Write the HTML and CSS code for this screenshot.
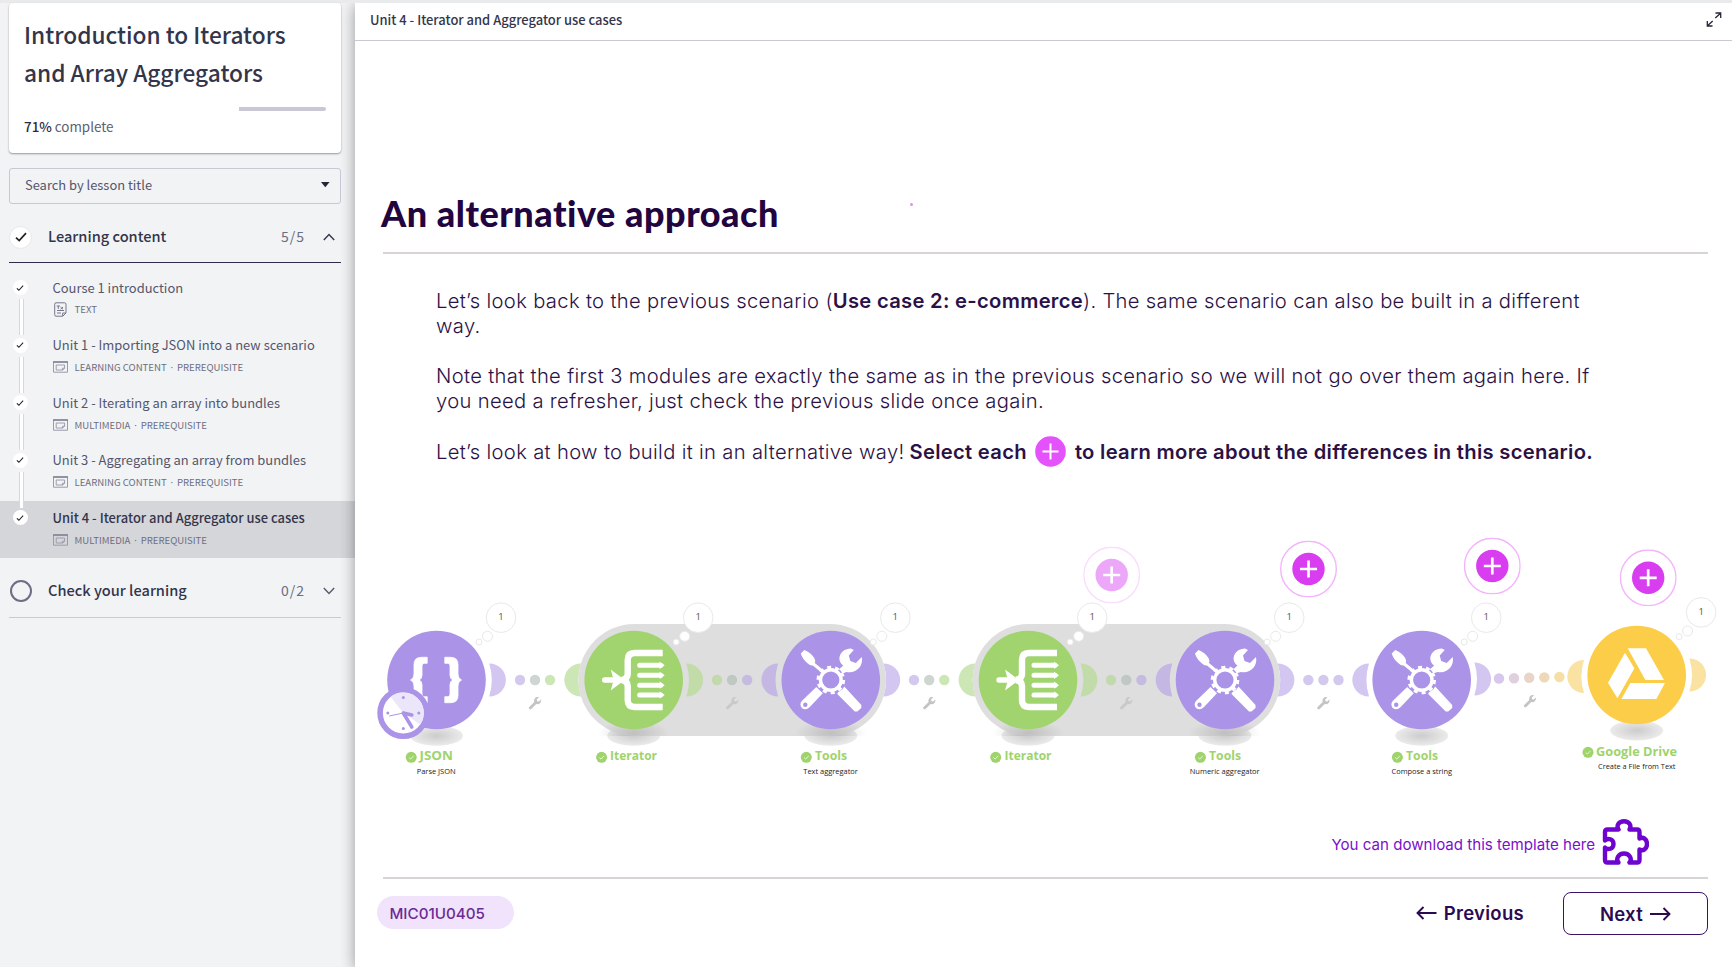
FILE: index.html
```html
<!DOCTYPE html>
<html lang="en">
<head>
<meta charset="utf-8">
<title>Introduction to Iterators and Array Aggregators</title>
<link rel="stylesheet" href="styles.css">
</head>
<body>
<svg class="defs" width="0" height="0">
  <defs>
    <radialGradient id="shade"><stop offset="0" stop-color="#000" stop-opacity=".2"/><stop offset="1" stop-color="#000" stop-opacity=".08"/></radialGradient>
    <radialGradient id="soft"><stop offset="0" stop-color="#000" stop-opacity=".14"/><stop offset="1" stop-color="#000" stop-opacity="0"/></radialGradient>
    <symbol id="tick" viewBox="0 0 16 16"><path d="M3 8.6 6.2 11.6 13 4.2" fill="none" stroke="#222" stroke-width="1.7"/></symbol>
    <symbol id="media" viewBox="0 0 15 12"><path d="M.5 1h14v10.2H.5z" fill="none" stroke="#9a9aac"/><path d="M0 1h15" stroke="#85859a" stroke-width="1.6"/><path d="M3.2 4h8.400v3.400L9.600 9H3.200zM9.400 9V7.200h2.200" fill="none" stroke="#9c9cae"/></symbol>
    <symbol id="plus" viewBox="-28.5 -28.5 57 57"><circle r="27.8" fill="#fff" stroke="#f3b4fb" stroke-width="1.4"/><circle r="16.2" fill="#d83df0"/><path d="M-8.5 0H8.5M0-8.5V8.5" stroke="#fff" stroke-width="2.7"/></symbol>
    <g id="wrench"><path d="M-6 4.2-.7-1C-1.6-4.2 1-6.500 4-5.800L1.700-3.400 2.200-1.800 3.900-1.400 6-3.600C6.600-.5 4 1.800 1.300 1.100L-4 6.200C-5.200 6.800-6.700 5.400-6 4.200Z"/></g>
    <g id="earR"><path d="M52.700-16.500A16.700 16.500 0 0 1 52.700 16.500A55 55 0 0 0 52.700-16.500Z"/></g>
    <g id="earL"><path d="M-52.700-16.500A16.700 16.500 0 0 0-52.700 16.500A55 55 0 0 1-52.700-16.500Z"/></g>
    <g id="bubble"><g fill="#fff" stroke="#e9e9e9" stroke-width="1"><circle cx="42.500" cy="-38" r="3"/><circle cx="51" cy="-43.700" r="5"/><circle cx="64.500" cy="-62.300" r="14.800"/></g><text x="64.500" y="-59.600" class="count">1</text></g>
    <g id="ok"><circle r="5.500" fill="#9fd36c"/><path d="M-2.300.2-.6 1.800 2.500-1.500" fill="none" stroke="#e6f5d8" stroke-width="1"/></g>
    <g id="json"><circle r="49.300" fill="#ab94e8"/><g fill="#fff" stroke="#fff" stroke-width=".8"><path d="M-9.300-22.700H-15Q-22.500-22.700-22.500-15.500V-6Q-22.500-1.500-26 0Q-22.500 1.500-22.500 6V15.500Q-22.500 22.700-15 22.700H-9.300V16.700H-12.500Q-14.500 16.700-14.500 14V5Q-14.500 1.500-17 0Q-14.500-1.500-14.500-5V-14Q-14.500-16.700-12.500-16.700H-9.300Z"/><path transform="scale(-1 1)" d="M-8.300-22.700H-14Q-21.500-22.700-21.500-15.500V-6Q-21.500-1.500-25 0Q-21.500 1.500-21.500 6V15.500Q-21.500 22.700-14 22.700H-8.300V16.700H-11.500Q-13.500 16.700-13.500 14V5Q-13.500 1.500-16 0Q-13.500-1.500-13.500-5V-14Q-13.500-16.700-11.500-16.700H-8.300Z"/></g></g>
    <g id="iter"><circle r="49.300" fill="#a1d46f"/><path d="M29-27H1Q-6-27-6-20V-6Q-6-1-12 0Q-6 1-6 6V20Q-6 27 1 27H29" fill="none" stroke="#fff" stroke-width="6.400"/><path d="M-29 0H-16" stroke="#fff" stroke-width="5.400" stroke-linecap="round"/><path d="M-23-10.500-9 0-23 10.500-20 0Z" fill="#fff"/><g fill="none" stroke="#fff" stroke-width="5" stroke-linecap="round"><path d="M6-14.700H27M6-4.700H27M6 5.200H27M6 15H27"/></g><g fill="#fff"><path d="M26-18.300 31-14.700 26-11.100zM26-8.300 31-4.700 26-1.100zM26 1.600 31 5.200 26 8.800zM26 11.400 31 15 26 18.600z"/></g></g>
    <g id="tools"><circle r="49.300" fill="#ab94e8"/><path d="M-30-26.500-26.500-30Q-20-27.500-16.500-22Q-15-19-16-17L-7-9.500-9.500-7.500-18-14.500Q-20.500-14-23-16.500Q-28.500-21-30-26.500Z" fill="#fff"/><path d="M7.500-10 12.500-14.500C5-20 9-31 20-31.500L23-30 18-24.500 19.500-19 25-17 31-23C33-14 25-6 16-8L11-6.500Z" fill="#fff"/><path d="M-14.500 7-8 13.200-21 27Q-25 31-29 28Q-32 24-28.500 20.500Z" fill="#fff"/><circle cx="-25.500" cy="24.800" r="2.200" fill="#ab94e8"/><path d="M13.500 6.500 30.500 25V28L26.500 31.500H24L6.500 14 7 12.500 11.500 9.500Z" fill="#fff"/><circle r="13.600" fill="#ab94e8"/><circle r="12.500" fill="none" stroke="#fff" stroke-width="3.600" stroke-dasharray="3.900 3.950"/><circle r="10.300" fill="#ab94e8" stroke="#fff" stroke-width="3.400"/></g>
    <g id="drive"><circle r="49.300" fill="#fccd48"/><path fill="#fff" d="M-11.700-22.300-2.300-6.700-19.300 23.300-28.700 7.700ZM-9-26.700H9.300L27.300 5H8.700ZM-6.300 8H28.300L19.700 24H-15.300Z"/></g>
  </defs>
</svg>
<div class="app">
  <aside class="sidebar">
    <section class="card">
      <h2 class="course">Introduction to Iterators<br>and Array Aggregators</h2>
      <div class="bar"><span class="bar-rest"></span></div>
      <p class="done"><b>71%</b> complete</p>
    </section>
    <div class="search"><span>Search by lesson title</span><svg width="9" height="6"><path d="M0 0H8.600L4.300 5.200z" fill="#26263a"/></svg></div>
    <div class="section open">
      <span class="badge"><svg width="16" height="16"><use href="#tick"/></svg></span>
      <h3>Learning content</h3><span class="num">5/5</span>
      <svg width="12" height="8"><path d="M.8 7 6 1.600 11.200 7" fill="none" stroke="#3a3a50" stroke-width="1.500"/></svg>
    </div>
    <ul class="lessons">
      <li><span class="dot"><svg width="10" height="10"><use href="#tick"/></svg></span><div><h4>Course 1 introduction</h4><p><svg class="doc" width="13" height="15" viewBox="0 0 13 15" fill="none" stroke="#77778b"><path d="M2 .8h8.500q1.500 0 1.500 1.500V11L8.800 14.200H2Q.7 14.200.7 12.700V2.300Q.7.8 2 .8zM8.700 14V11h3M3 8.500h7M3 11h4M2.700 4h3.200M4.300 4v3M6.500 5l2.500 2.300M9 5 6.500 7.300"/></svg><span>TEXT</span></p></div></li>
      <li><span class="dot"><svg width="10" height="10"><use href="#tick"/></svg></span><div><h4>Unit 1 - Importing JSON into a new scenario</h4><p><svg width="15" height="12"><use href="#media"/></svg><span>LEARNING CONTENT <i>·</i> PREREQUISITE</span></p></div></li>
      <li><span class="dot"><svg width="10" height="10"><use href="#tick"/></svg></span><div><h4>Unit 2 - Iterating an array into bundles</h4><p><svg width="15" height="12"><use href="#media"/></svg><span>MULTIMEDIA <i>·</i> PREREQUISITE</span></p></div></li>
      <li><span class="dot"><svg width="10" height="10"><use href="#tick"/></svg></span><div><h4>Unit 3 - Aggregating an array from bundles</h4><p><svg width="15" height="12"><use href="#media"/></svg><span>LEARNING CONTENT <i>·</i> PREREQUISITE</span></p></div></li>
      <li class="current"><span class="dot"><svg width="10" height="10"><use href="#tick"/></svg></span><div><h4>Unit 4 - Iterator and Aggregator use cases</h4><p><svg width="15" height="12"><use href="#media"/></svg><span>MULTIMEDIA <i>·</i> PREREQUISITE</span></p></div></li>
    </ul>
    <div class="section">
      <span class="badge ring"></span>
      <h3>Check your learning</h3><span class="num">0/2</span>
      <svg width="12" height="8"><path d="M.8 1 6 6.400 11.200 1" fill="none" stroke="#5b5b70" stroke-width="1.500"/></svg>
    </div>
  </aside>
  <main class="main">
    <header class="top"><span>Unit 4 - Iterator and Aggregator use cases</span>
      <svg width="16" height="15" viewBox="0 0 16 15" fill="none" stroke="#26263a" stroke-width="1.300"><path d="M9.500 1H14.700V6M14.500 1.200 9.300 6M6.500 14H1.300V9M1.500 13.800 6.700 9"/></svg>
    </header>
    <div class="slide">
      <h1>An alternative approach</h1>
      <i class="speck"></i>
      <hr>
      <div class="copy">
        <p>Let’s look back to the previous scenario (<b>Use case 2: e-commerce</b>). The same scenario can also be built in a different<br>way.</p>
        <p>Note that the first 3 modules are exactly the same as in the previous scenario so we will not go over them again here. If<br>you need a refresher, just check the previous slide once again.</p>
        <p class="pick"><span>Let’s look at how to build it in an alternative way!</span><b class="call">Select each</b><svg width="31" height="31" viewBox="-15.500 -15.500 31 31"><circle r="15.300" fill="#e352fb"/><path d="M-8 0H8M0-8V8" stroke="#fff" stroke-width="2"/></svg><b>to learn more about the differences in this scenario.</b></p>
      </div>
      <svg class="flow" width="1377" height="260" viewBox="355 530 1377 260">
        <g fill="#d3c6f0"><use href="#earR" x="436.500" y="680"/><use href="#earR" x="830.800" y="680"/><use href="#earR" x="1225" y="680"/><use href="#earR" x="1421.700" y="679"/><use href="#earL" x="1421.700" y="680"/></g>
        <g fill="#cde6b6"><use href="#earL" x="633.700" y="680"/><use href="#earL" x="1028" y="680"/></g>
        <g fill="#fae2a2"><use href="#earL" x="1636.700" y="676.500"/><use href="#earR" x="1636.700" y="675"/></g>
        <g fill="url(#shade)"><ellipse cx="436.500" cy="735.700" rx="26.500" ry="10"/><ellipse cx="633.700" cy="735.700" rx="26.500" ry="10"/><ellipse cx="830.800" cy="735.700" rx="26.500" ry="10"/><ellipse cx="1028" cy="735.700" rx="26.500" ry="10"/><ellipse cx="1225" cy="735.700" rx="26.500" ry="10"/><ellipse cx="1421.700" cy="735.700" rx="26.500" ry="10"/><ellipse cx="1636.700" cy="730.500" rx="26.500" ry="10"/></g>
        <g fill="#dedede"><rect x="578.500" y="624" width="307.500" height="112" rx="56"/><rect x="972.700" y="624" width="307.500" height="112" rx="56"/></g>
        <svg x="355" y="624" width="1377" height="112" viewBox="355 624 1377 112"><g fill="url(#soft)"><ellipse cx="633.700" cy="733" rx="36" ry="13"/><ellipse cx="830.800" cy="733" rx="36" ry="13"/><ellipse cx="1028" cy="733" rx="36" ry="13"/><ellipse cx="1225" cy="733" rx="36" ry="13"/></g></svg>
        <g fill="#c1dba9"><use href="#earR" x="633.700" y="680"/><use href="#earR" x="1028" y="680"/></g>
        <g fill="#c5b7e3"><use href="#earL" x="830.800" y="680"/><use href="#earL" x="1225" y="680"/></g>
        <g fill="#d3c8ee"><circle cx="520" cy="680" r="5.200"/><circle cx="914" cy="680" r="5.200"/><circle cx="1308.300" cy="680" r="5.200"/><circle cx="1323.400" cy="680" r="5.200"/><circle cx="1338.500" cy="680" r="5.200"/></g>
        <g fill="#cdd6d0"><circle cx="535" cy="680" r="5.200"/><circle cx="929.200" cy="680" r="5.200"/></g>
        <g fill="#cde6b6"><circle cx="550" cy="680" r="5.200"/><circle cx="944.300" cy="680" r="5.200"/></g>
        <g fill="#c1d9ac"><circle cx="717" cy="680" r="5.200"/><circle cx="1111" cy="680" r="5.200"/></g>
        <g fill="#bfc8c3"><circle cx="732" cy="680" r="5.200"/><circle cx="1126.300" cy="680" r="5.200"/></g>
        <g fill="#c5bbe1"><circle cx="747.200" cy="680" r="5.200"/><circle cx="1141.400" cy="680" r="5.200"/></g>
        <circle cx="1499" cy="678.500" r="5.200" fill="#d5c8ec"/><circle cx="1514" cy="678.200" r="5.200" fill="#e0cfdc"/><circle cx="1529.200" cy="677.800" r="5.200" fill="#e8d5ca"/><circle cx="1544.300" cy="677.400" r="5.200" fill="#eed8b8"/><circle cx="1559.400" cy="677" r="5.200" fill="#f6dfa6"/>
        <g fill="#c4c4c4"><use href="#wrench" x="535" y="703"/><use href="#wrench" x="929.300" y="703"/><use href="#wrench" x="1323.400" y="703"/><use href="#wrench" x="1530" y="701"/></g>
        <g fill="#c9c9c9"><use href="#wrench" x="732.200" y="703"/><use href="#wrench" x="1126.300" y="703"/></g>
        <use href="#json" x="436.500" y="680"/><use href="#iter" x="633.700" y="680"/><use href="#tools" x="830.800" y="680"/><use href="#iter" x="1028" y="680"/><use href="#tools" x="1225" y="680"/><use href="#tools" x="1421.700" y="680"/><use href="#drive" x="1636.700" y="675"/>
        <g transform="translate(403.300 713)"><circle r="23.200" fill="#fff" stroke="#ab94e8" stroke-width="5.600"/><path d="M0 0-12.500-16A20.400 20.400 0 0 1 17 11.500Z" fill="#ece6fa"/><g fill="#ab94e8"><circle cy="-15.500" r="1.500"/><circle cy="15.500" r="1.500"/><circle cx="-15.500" r="1.500"/><circle cx="15.500" r="1.500"/></g><path d="M0 0 8.500 2M0 0 8.500 14" stroke="#ab94e8" stroke-width="3.600" stroke-linecap="round"/><path d="M0 0-14 3" stroke="#ab94e8"/></g>
        <use href="#bubble" x="436.500" y="680"/><use href="#bubble" x="633.700" y="680"/><use href="#bubble" x="830.800" y="680"/><use href="#bubble" x="1027.700" y="680"/><use href="#bubble" x="1224.700" y="680"/><use href="#bubble" x="1421.700" y="680"/><use href="#bubble" x="1636.600" y="674.700"/>
        <use href="#ok" x="411.200" y="757.300"/><use href="#ok" x="601.600" y="757.300"/><use href="#ok" x="806.300" y="757.300"/><use href="#ok" x="995.700" y="757.300"/><use href="#ok" x="1200.400" y="757.300"/><use href="#ok" x="1397.400" y="757.300"/><use href="#ok" x="1588" y="752.300"/>
        <g class="name"><text x="419.500" y="760.300" textLength="33.500" lengthAdjust="spacingAndGlyphs">JSON</text><text x="610" y="760.300" textLength="47" lengthAdjust="spacingAndGlyphs">Iterator</text><text x="815" y="760.300" textLength="32" lengthAdjust="spacingAndGlyphs">Tools</text><text x="1004.500" y="760.300" textLength="47" lengthAdjust="spacingAndGlyphs">Iterator</text><text x="1209" y="760.300" textLength="32" lengthAdjust="spacingAndGlyphs">Tools</text><text x="1406" y="760.300" textLength="32" lengthAdjust="spacingAndGlyphs">Tools</text><text x="1596" y="755.600" textLength="81" lengthAdjust="spacingAndGlyphs">Google Drive</text></g>
        <g class="sub"><text x="416.700" y="774" textLength="39" lengthAdjust="spacingAndGlyphs">Parse JSON</text><text x="803.300" y="774" textLength="54.500" lengthAdjust="spacingAndGlyphs">Text aggregator</text><text x="1189.700" y="774" textLength="70" lengthAdjust="spacingAndGlyphs">Numeric aggregator</text><text x="1391.500" y="774" textLength="60.500" lengthAdjust="spacingAndGlyphs">Compose a string</text><text x="1598" y="768.500" textLength="77.500" lengthAdjust="spacingAndGlyphs">Create a File from Text</text></g>
        <use href="#plus" x="1083.200" y="546.500" width="57" height="57" opacity=".45"/><use href="#plus" x="1280" y="540.500" width="57" height="57"/><use href="#plus" x="1463.800" y="537.500" width="57" height="57"/><use href="#plus" x="1619.700" y="549.300" width="57" height="57"/>
      </svg>
      <div class="download"><span>You can download this template here</span>
        <svg width="48" height="48" viewBox="0 0 48 48" fill="none" stroke="#6e05cf" stroke-width="4.400" stroke-linejoin="round" stroke-linecap="round"><path d="M17.500 11.500H6.500Q4 11.500 4 14V22.500C7 19.500 12.500 21 12.500 26C12.500 31 7 32.500 4 29.500V42Q4 44.500 6.500 44.500H17.500C14.500 41 17.500 35.500 23 35.500C28.500 35.500 31.500 41 28.500 44.500H36Q38.500 44.500 38.500 42V31.500C42 33.500 46 31 46 26C46 21 42 18.500 38.500 20.500V14Q38.500 11.500 36 11.500H28.500C31 7.500 28 3.200 23 3.200C18 3.200 15 7.500 17.500 11.500Z"/></svg>
      </div>
      <hr class="low">
      <footer class="foot">
        <span class="code">MIC01U0405</span>
        <a class="prev"><svg width="21" height="14"><path d="M20.500 7H1.500M7.500 1 1.500 7 7.500 13" fill="none" stroke="#2b0a52" stroke-width="1.900"/></svg><span>Previous</span></a>
        <a class="next"><span>Next</span><svg width="21" height="14"><path d="M0 7H19.500M13.500 1 19.500 7 13.500 13" fill="none" stroke="#2b0a52" stroke-width="1.900"/></svg></a>
      </footer>
    </div>
  </main>
</div>
</body>
</html>
```
FILE: styles.css
```css
* { box-sizing: border-box; }
body { margin: 0; width: 1732px; height: 967px; overflow: hidden; background: #f1f3f5; font-family: "Noto Sans CJK SC", "Noto Sans", sans-serif; color: #33354b; }
h1, h2, h3, h4, p, ul { margin: 0; padding: 0; font-weight: 500; }
ul { list-style: none; }
.defs { position: absolute; }
.app { display: flex; height: 967px; padding-top: 3px; box-shadow: inset 0 3px 0 #e8eaec; }

.sidebar { width: 355px; flex: none; }
.card { margin: 0 14px 0 9px; height: 150px; padding: 13px 15px 0 15px; background: #fff; border-radius: 4px; box-shadow: 0 1px 2px rgba(0,0,0,.38); }
.course { font-size: 22.700px; line-height: 38px; white-space: nowrap; }
.bar { display: flex; justify-content: flex-end; margin-top: 15px; height: 4px; }
.bar-rest { width: 87px; background: #c9c8d4; border-radius: 0 2px 2px 0; }
.done { margin-top: 5px; font-size: 13.400px; line-height: 20px; color: #5d5e70; font-weight: 400; }
.done b { font-weight: 500; color: #2c2d42; }
.search { display: flex; align-items: center; justify-content: space-between; margin: 15px 14px 0 9px; height: 36px; padding: 0 10px 3px 15px; border: 1px solid #c6c8d5; border-radius: 3px; font-size: 12.900px; color: #55566a; }
.section { display: flex; align-items: center; height: 56px; margin: 0 14px 0 9px; padding: 3px 6px 0 0; border-bottom: 1px solid #c9cbd2; }
.section.open { height: 59px; padding-top: 8px; border-color: #2d2d49; }
.section h3 { margin: -3px 0 0 16px; font-size: 14.600px; flex: 1; white-space: nowrap; }
.num { margin: -3px 18px 0 0; font-size: 14px; letter-spacing: 1px; color: #6b6c80; }
.badge { display: flex; align-items: center; justify-content: center; width: 23px; height: 23px; border-radius: 50%; background: #fff; border: 1px solid #e6e8ea; }
.ring { background: none; border: 2px solid #6d6d85; width: 22px; height: 22px; margin: 0 0 0 1px; }
.lessons { padding-top: 8px; }
.lessons li { display: flex; height: 57.600px; padding: 9px 0 0 12.500px; position: relative; }
.lessons li:not(:last-child)::after { content: ""; position: absolute; left: 19px; top: 28px; width: 3px; height: 36px; border: solid #d7d8dc; border-width: 0 1px; background: #fff; z-index: 1; }
.lessons .current { background: #d5d6da; height: 57px; }
.dot { display: flex; align-items: center; justify-content: center; flex: none; width: 15px; height: 15px; border-radius: 50%; background: #fff; margin: 0 25px 0 0; }
.lessons h4 { margin-top: -2.300px; font-size: 12.950px; line-height: 20px; font-weight: 400; color: #55566c; white-space: nowrap; }
.lessons .current h4 { font-weight: 500; color: #33354b; }
.lessons p { display: flex; align-items: center; gap: 7px; height: 20px; margin-top: 1.700px; font-size: 9.600px; color: #6d6e82; font-weight: 400; white-space: nowrap; }
.lessons p i { padding: 0 1.700px; font-family: "Noto Sans", sans-serif; font-style: normal; }
.lessons .doc { margin: 0 1px; }
.lessons + .section { margin-top: 4px; }

.main { position: relative; flex: 1; background: #fff; box-shadow: 0 2px 14px rgba(0,0,0,.38); clip-path: inset(0 0 0 -14px); }
.top { display: flex; align-items: center; justify-content: space-between; height: 38px; padding: 0 10px 4px 15px; border-bottom: 1px solid #c9c8d4; font-size: 12.950px; font-weight: 500; }
.slide { padding-top: 150px; font-family: Inter, sans-serif; color: #2b1145; }
h1 { margin-left: 26px; font: 900 36px/44px Lato, sans-serif; letter-spacing: .53px; color: #22043f; white-space: nowrap; }
.speck { position: absolute; left: 555px; top: 200px; width: 3px; height: 3px; border-radius: 50%; background: #e58cf2; }
hr { height: 2px; margin: 17px 24px 0 28px; border: 0; background: #d8d3d6; }
.copy { display: flex; flex-direction: column; gap: 25px; margin: 34px 0 0 81px; height: 242px; font-size: 20.200px; line-height: 25px; letter-spacing: .33px; white-space: nowrap; }
.copy p { font-weight: 300; }
.copy b { font-weight: 600; letter-spacing: .3px; }
.pick { display: flex; align-items: center; height: 26px; }
.pick svg { margin: 0 9px 0 8px; }
.call { margin-left: 5px; }
.flow { display: block; font-family: "Open Sans", sans-serif; }
.count { font-size: 9.500px; fill: #555; text-anchor: middle; }
.name { font-size: 13.200px; font-weight: 700; fill: #9fd36c; }
.sub { font-size: 8px; fill: #222; }
.download { display: flex; justify-content: flex-end; align-items: center; gap: 6px; height: 60px; margin: 24px 83px 0 0; font-size: 15.100px; color: #7a10cc; }
.download svg { margin-top: -5px; }
.low { margin-top: 3px; }
.foot { display: flex; align-items: center; padding: 13px 24px 0 22px; font-weight: 600; font-size: 18.500px; letter-spacing: .3px; color: #2b0a52; }
.code { width: 137px; height: 33px; margin: -2px auto 0 0; padding-left: 12.500px; border-radius: 17px; background: #f0e3fb; color: #6b2a96; font-size: 15.200px; font-weight: 500; letter-spacing: 0; line-height: 35px; }
.prev, .next { display: flex; align-items: center; gap: 7px; }
.prev { margin: -1px 39px 0 0; }
.next { justify-content: center; width: 145px; height: 43px; border: 1.500px solid #3a1266; border-radius: 8px; }
```
